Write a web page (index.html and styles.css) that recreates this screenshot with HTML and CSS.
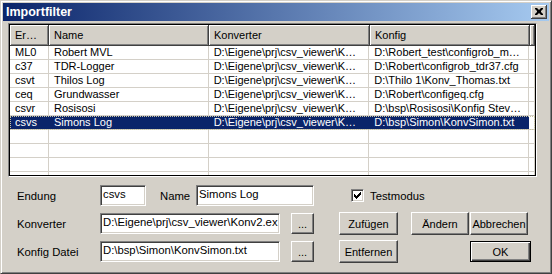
FILE: index.html
```html
<!DOCTYPE html>
<html lang="de">
<head>
    <meta charset="UTF-8">
    <title>Importfilter</title>
    <link rel="stylesheet" href="styles.css">
</head>
<body>
    <div class="window">
        <div class="titlebar">
            <span class="title">Importfilter</span>
            <span class="close-btn">
                <svg width="8" height="7" viewBox="0 0 8 7"><path d="M0 0h2l2 2 2-2h2v1l-2 2v1l2 2v1h-2l-2-2-2 2h-2v-1l2-2v-1l-2-2z" fill="#000"/></svg>
            </span>
        </div>

        <div class="list">
            <div class="list-inner">
                <div class="list-head">
                    <div class="hcell c1">Er…</div>
                    <div class="hcell c2">Name</div>
                    <div class="hcell c3">Konverter</div>
                    <div class="hcell c4">Konfig</div>
                    <div class="hcell c5"></div>
                </div>
                <div class="row">
                    <div class="cell c1">ML0</div>
                    <div class="cell c2">Robert MVL</div>
                    <div class="cell c3">D:\Eigene\prj\csv_viewer\K…</div>
                    <div class="cell c4">D:\Robert_test\configrob_m…</div>
                    <div class="cell c5"></div>
                </div>
                <div class="row">
                    <div class="cell c1">c37</div>
                    <div class="cell c2">TDR-Logger</div>
                    <div class="cell c3">D:\Eigene\prj\csv_viewer\K…</div>
                    <div class="cell c4">D:\Robert\configrob_tdr37.cfg</div>
                    <div class="cell c5"></div>
                </div>
                <div class="row">
                    <div class="cell c1">csvt</div>
                    <div class="cell c2">Thilos Log</div>
                    <div class="cell c3">D:\Eigene\prj\csv_viewer\K…</div>
                    <div class="cell c4">D:\Thilo 1\Konv_Thomas.txt</div>
                    <div class="cell c5"></div>
                </div>
                <div class="row">
                    <div class="cell c1">ceq</div>
                    <div class="cell c2">Grundwasser</div>
                    <div class="cell c3">D:\Eigene\prj\csv_viewer\K…</div>
                    <div class="cell c4">D:\Robert\configeq.cfg</div>
                    <div class="cell c5"></div>
                </div>
                <div class="row">
                    <div class="cell c1">csvr</div>
                    <div class="cell c2">Rosisosi</div>
                    <div class="cell c3">D:\Eigene\prj\csv_viewer\K…</div>
                    <div class="cell c4">D:\bsp\Rosisosi\Konfig Stev…</div>
                    <div class="cell c5"></div>
                </div>
                <div class="row selected">
                    <div class="cell c1">csvs</div>
                    <div class="cell c2">Simons Log</div>
                    <div class="cell c3">D:\Eigene\prj\csv_viewer\K…</div>
                    <div class="cell c4">D:\bsp\Simon\KonvSimon.txt</div>
                    <div class="cell c5"></div>
                </div>
                <div class="row"><div class="cell c1"></div><div class="cell c2"></div><div class="cell c3"></div><div class="cell c4"></div><div class="cell c5"></div></div>
                <div class="row"><div class="cell c1"></div><div class="cell c2"></div><div class="cell c3"></div><div class="cell c4"></div><div class="cell c5"></div></div>
                <div class="row"><div class="cell c1"></div><div class="cell c2"></div><div class="cell c3"></div><div class="cell c4"></div><div class="cell c5"></div></div>
                <div class="row"><div class="cell c1"></div><div class="cell c2"></div><div class="cell c3"></div><div class="cell c4"></div><div class="cell c5"></div></div>
            </div>
        </div>

        <div class="form">
            <div class="form-row">
                <span class="label">Endung</span>
                <span class="field w-short">csvs</span>
                <span class="label-name">Name</span>
                <span class="field w-name">Simons Log</span>
                <span class="checkbox">
                    <svg width="7" height="7" viewBox="0 0 7 7"><path d="M0 2h1v1h1v1h1v-1h1v-1h1v-1h1v-1h1v3h-1v1h-1v1h-1v1h-1v1h-1v-1h-1v-1h-1z" fill="#000"/></svg>
                </span>
                <span class="check-label">Testmodus</span>
            </div>
            <div class="form-row">
                <span class="label">Konverter</span>
                <span class="field w-path">D:\Eigene\prj\csv_viewer\Konv2.ex</span>
                <button class="btn btn-dots">...</button>
                <button class="btn btn-add">Zufügen</button>
                <button class="btn btn-edit">Ändern</button>
                <button class="btn btn-cancel">Abbrechen</button>
            </div>
            <div class="form-row">
                <span class="label">Konfig Datei</span>
                <span class="field w-path">D:\bsp\Simon\KonvSimon.txt</span>
                <button class="btn btn-dots">...</button>
                <button class="btn btn-add">Entfernen</button>
                <button class="btn btn-ok">OK</button>
            </div>
        </div>
    </div>
</body>
</html>
```

FILE: styles.css
```css
body {
    margin: 0;
    font-family: "Liberation Sans", Arial, sans-serif;
    font-size: 11px;
    background: #d4d0c8;
}
.window {
    width: 552px;
    height: 274px;
    box-sizing: border-box;
    background: #d4d0c8;
    border: 1px solid;
    border-color: #d4d0c8 #404040 #404040 #d4d0c8;
    box-shadow: inset 1px 1px #fff, inset -1px -1px #808080;
    padding: 2px;
}
.titlebar {
    height: 18px;
    display: flex;
    align-items: center;
    justify-content: space-between;
    padding: 0 2px 0 3px;
    background: linear-gradient(to right, #0a246a, #a6caf0);
    color: #fff;
}
.title {
    font-weight: bold;
    font-size: 12.5px;
}
.close-btn {
    width: 16px;
    height: 14px;
    box-sizing: border-box;
    display: flex;
    align-items: center;
    justify-content: center;
    background: #d4d0c8;
    border-right: 1px solid #404040;
    border-bottom: 1px solid #404040;
    box-shadow: inset 1px 1px #fff, inset -1px -1px #808080;
}
.list {
    margin: 2px 12px 0 5px;
    height: 154px;
    box-sizing: border-box;
    border: 1px solid;
    border-color: #808080 #fff #fff #808080;
}
.list-inner {
    height: 100%;
    box-sizing: border-box;
    border: 1px solid #000;
    background: #fff;
    overflow: hidden;
}
.list-head {
    display: flex;
    height: 21px;
    background: #d4d0c8;
}
.hcell {
    box-sizing: border-box;
    height: 21px;
    line-height: 20px;
    padding-left: 5px;
    background: #d4d0c8;
    border-right: 1px solid #404040;
    border-bottom: 1px solid #404040;
    box-shadow: inset 1px 1px #fff, inset -1px -1px #808080;
    white-space: nowrap;
    overflow: hidden;
}
.row {
    display: flex;
    height: 14px;
}
.cell {
    box-sizing: border-box;
    height: 14px;
    line-height: 13px;
    padding-left: 5px;
    border-right: 1px solid #d4d0c8;
    border-bottom: 1px solid #d4d0c8;
    white-space: nowrap;
    overflow: hidden;
    color: #000;
}
.c1 { width: 39px; }
.c2 { width: 160px; }
.c3 { width: 161px; }
.c4 { width: 160px; }
.c5 { flex: 1; }
.hcell.c5 { padding: 0; }
.row.selected {
    background: #0a246a;
    outline: 1px dotted #c8c4a0;
    outline-offset: -1px;
}
.row.selected .cell {
    color: #fff;
    border-right-color: #0a246a;
}
.row.selected .c5 {
    background: #fff;
    border-right-color: #d4d0c8;
}
.form {
    display: flex;
    flex-direction: column;
    gap: 7px;
    padding: 8px 0 0 14px;
    font-size: 11.3px;
}
.form-row {
    display: flex;
    align-items: center;
    height: 21px;
}
.label {
    width: 83px;
}
.label-name {
    width: 36px;
    margin-left: 14px;
}
.field {
    height: 21px;
    box-sizing: border-box;
    padding: 0 2px;
    line-height: 17px;
    background: #fff;
    border: 1px solid;
    border-color: #808080 #fff #fff #808080;
    box-shadow: inset 1px 1px #404040, inset -1px -1px #d4d0c8;
    white-space: nowrap;
    overflow: hidden;
}
.w-short { width: 46px; }
.w-name { width: 118px; }
.w-path { width: 180px; }
.checkbox {
    width: 13px;
    height: 13px;
    box-sizing: border-box;
    margin-left: 37px;
    display: flex;
    align-items: center;
    justify-content: center;
    background: #fff;
    border: 1px solid;
    border-color: #808080 #fff #fff #808080;
    box-shadow: inset 1px 1px #404040, inset -1px -1px #d4d0c8;
}
.check-label {
    margin-left: 6px;
}
.btn {
    height: 23px;
    box-sizing: border-box;
    padding: 0;
    font-family: "Liberation Sans", Arial, sans-serif;
    font-size: 11px;
    color: #000;
    background: #d4d0c8;
    border: 1px solid;
    border-color: #fff #404040 #404040 #fff;
    box-shadow: inset -1px -1px #808080;
    flex: none;
}
.btn-dots {
    width: 23px;
    height: 21px;
    margin-left: 11px;
}
.btn-add {
    width: 59px;
    margin-left: 25px;
}
.btn-edit {
    width: 58px;
    margin-left: 13px;
}
.btn-cancel {
    width: 58px;
    margin-left: 1px;
}
.btn-ok {
    width: 61px;
    height: 21px;
    margin-left: 72px;
    border: 1px solid #000;
    box-shadow: inset 1px 1px #fff, inset -1px -1px #404040, inset -2px -2px #808080;
}
```
